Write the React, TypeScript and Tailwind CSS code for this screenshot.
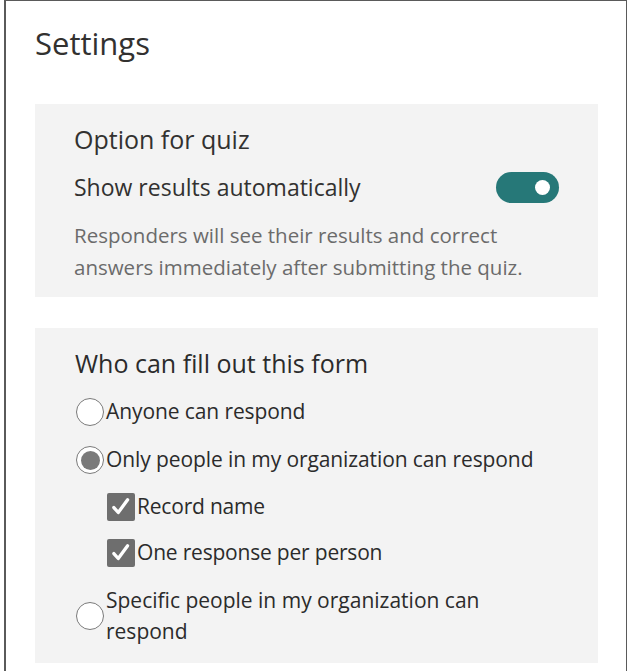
export default function App() {
  return (
    <div className="min-h-[671px] bg-white" style={{ fontFamily: '"Open Sans", "Noto Sans", sans-serif' }}>
      <div className="ml-[4px] min-h-[671px] border-l-2 border-t border-r border-[#5a5a5a] pl-[29px] pr-[28px]">
        <h1 className="pt-[22px] text-[31px] leading-[40px] text-[#323130]">Settings</h1>

        {/* quiz options */}
        <section className="mt-[41px] bg-[#f3f3f3] pl-[39px] pr-[39px] pt-[18px] pb-[14px]">
          <h2 className="text-[25px] leading-[34px] text-[#323130]">Option for quiz</h2>
          <div className="mt-[16px] flex h-[31px] items-center justify-between">
            <span className="text-[23px] text-[#323130]">Show results automatically</span>
            <span className="flex h-[31px] w-[63px] items-center justify-end rounded-full bg-[#267878] pr-[9px]">
              <span className="h-[15px] w-[15px] rounded-full bg-white" />
            </span>
          </div>
          <p className="mt-[16px] text-[20.5px] leading-[32px] text-[#6b6b6b]">
            Responders will see their results and correct
            <br />
            answers immediately after submitting the quiz.
          </p>
        </section>

        {/* who can respond */}
        <section className="mt-[31px] bg-[#f3f3f3] pl-[41px] pr-[40px] pt-[18px] pb-[16px] text-[#2b2b2b]">
          <h2 className="-ml-[1px] text-[25px] leading-[34px]">Who can fill out this form</h2>
          <div className="mt-[8px]">
            <Radio label="Anyone can respond" />
            <Radio label="Only people in my organization can respond" checked />
            <Check label="Record name" />
            <Check label="One response per person" />
            <div className="mt-[9px] flex items-center">
              <RadioDot />
              <span className="ml-[2px] text-[21px] leading-[31px]">
                Specific people in my organization can
                <br />
                respond
              </span>
            </div>
          </div>
        </section>
      </div>
    </div>
  );
}

function RadioDot({ checked = false }: { checked?: boolean }) {
  return (
    <span className="flex h-[28px] w-[28px] shrink-0 items-center justify-center rounded-full border-[1.5px] border-[#7a7a7a] bg-white">
      {checked && <span className="h-[19px] w-[19px] rounded-full bg-[#7a7a7a]" />}
    </span>
  );
}

function Radio({ label, checked = false }: { label: string; checked?: boolean }) {
  return (
    <div className="flex h-[48px] items-center">
      <RadioDot checked={checked} />
      <span className="ml-[2px] text-[21px] tracking-[-0.1px]">{label}</span>
    </div>
  );
}

function Check({ label }: { label: string }) {
  return (
    <div className="flex h-[46px] items-center pl-[31px]">
      <span className="flex h-[28px] w-[28px] items-center justify-center rounded-[2px] bg-[#6e6e6e]">
        <svg width="22" height="22" viewBox="0 0 20 20" fill="none">
          <path d="M3.5 10.5 L7.5 15 L16 3.5" stroke="white" strokeWidth="3" strokeLinecap="round" strokeLinejoin="round" />
        </svg>
      </span>
      <span className="ml-[2px] text-[21px] tracking-[-0.2px]">{label}</span>
    </div>
  );
}
